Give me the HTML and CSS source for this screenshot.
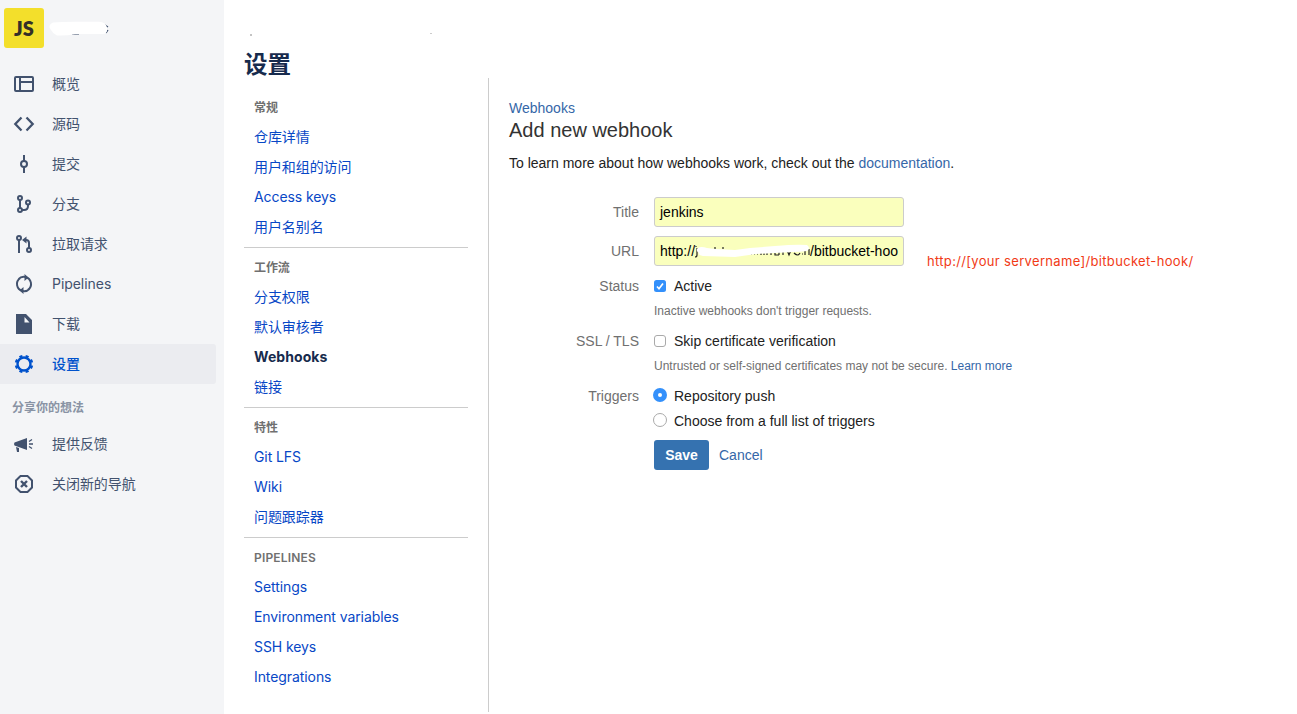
FILE: index.html
```html
<!DOCTYPE html>
<html lang="zh-CN">
<head>
<meta charset="utf-8">
<title>设置</title>
<link rel="stylesheet" href="styles.css">
</head>
<body>
<div class="app">
  <aside class="sidebar">
    <div class="repo">
      <div class="avatar">JS</div>
      <svg class="repo-name" width="62" height="16" viewBox="0 0 62 16"><path d="M57 4l3 2M60 9l-2 3" stroke="#42526e" stroke-width="1.300"/><path d="M24 13.500h7" stroke="#97a0af"/><path d="M5 1.500Q14 1 27 .800H51Q58 1 59 7T54 13L27 13Q18 15 9 14.500Q5 13 3 9Q-1 4 5 1.500Z" fill="#fff"/></svg>
    </div>
    <nav class="nav">
      <a class="nav-item"><svg class="icon" viewBox="0 0 24 24"><rect x="3" y="5" width="18" height="14" rx="1"/><path d="M8 5v14M8 10h13"/></svg><span>概览</span></a>
      <a class="nav-item"><svg class="icon" viewBox="0 0 24 24"><path d="M9.500 5.500L3.300 12l6.200 6.500M14.500 5.500l6.200 6.500-6.200 6.500" stroke-width="2.300"/></svg><span>源码</span></a>
      <a class="nav-item"><svg class="icon" viewBox="0 0 24 24"><circle cx="12" cy="12" r="3"/><path d="M12 3v6M12 15v6"/></svg><span>提交</span></a>
      <a class="nav-item"><svg class="icon" viewBox="0 0 24 24"><circle cx="8" cy="6" r="2"/><circle cx="8" cy="18" r="2"/><circle cx="16" cy="10.500" r="2"/><path d="M8 8v8M16 12.500v1.500q0 4-4 4h-2"/></svg><span>分支</span></a>
      <a class="nav-item"><svg class="icon" viewBox="0 0 24 24"><circle cx="7" cy="6" r="2"/><circle cx="17" cy="18" r="2"/><path d="M7 8v13M17 16v-5q0-3-3-3h-2"/><path class="solid" d="M10 8L14.500 4.500v7z"/></svg><span>拉取请求</span></a>
      <a class="nav-item"><svg class="icon" viewBox="0 0 24 24"><path d="M10.500 18.800A7 7 0 0 1 8 6.200M6.500 7.200A7 7 0 0 1 13 5M13.500 5.200A7 7 0 0 1 16 17.800M17.500 16.800A7 7 0 0 1 11 19"/><path class="solid" d="M12.500 2l4 3.500-4 3.500zM11.500 15v7l-4-3.500z"/></svg><span>Pipelines</span></a>
      <a class="nav-item"><svg class="icon" viewBox="0 0 24 24"><path class="solid" fill-rule="evenodd" d="M4 2h10l6 6v14H4zM12.500 5v5.500h5z"/></svg><span>下载</span></a>
      <a class="nav-item selected"><svg class="icon" viewBox="0 0 24 24"><circle cx="12" cy="12" r="6.500" stroke-width="2.400"/><circle cx="12" cy="12" r="8" stroke-width="2.600" pathLength="80" stroke-dasharray="4.800 5.200" stroke-dashoffset="7.400"/></svg><span>设置</span></a>
      <div class="nav-heading">分享你的想法</div>
      <a class="nav-item"><svg class="icon" viewBox="0 0 24 24"><path class="solid" d="M15 6v12L2.500 13.500Q1.500 12 2.500 10.500zM4 15l3 1v4H5z"/><path d="M17 9.500l3-2M17 12h4M17 14.500l3 2" stroke-width="1.300"/></svg><span>提供反馈</span></a>
      <a class="nav-item"><svg class="icon" viewBox="0 0 24 24"><path d="M8.500 4h7L20 8.500v7L15.500 20h-7L4 15.500v-7z"/><path d="M9 9l6 6M15 9l-6 6" stroke-width="2.400"/></svg><span>关闭新的导航</span></a>
    </nav>
  </aside>
  <main class="content">
    <svg class="crumbs" width="190" height="8" viewBox="0 0 190 8"><path d="M7 4v2" stroke="#888"/><path d="M186 3.500h2" stroke="#ccc"/></svg>
    <h1>设置</h1>
    <div class="columns">
      <nav class="subnav">
        <section class="group">
          <h2>常规</h2>
          <a>仓库详情</a><a>用户和组的访问</a><a>Access keys</a><a>用户名别名</a>
        </section>
        <section class="group">
          <h2>工作流</h2>
          <a>分支权限</a><a>默认审核者</a><a class="current">Webhooks</a><a>链接</a>
        </section>
        <section class="group">
          <h2>特性</h2>
          <a>Git LFS</a><a>Wiki</a><a>问题跟踪器</a>
        </section>
        <section class="group">
          <h2 class="latin">PIPELINES</h2>
          <a>Settings</a><a>Environment variables</a><a>SSH keys</a><a>Integrations</a>
        </section>
      </nav>
      <section class="panel">
        <a class="parent">Webhooks</a>
        <h3>Add new webhook</h3>
        <p class="intro">To learn more about how webhooks work, check out the <a>documentation</a>.</p>
        <form class="form">
          <div class="row"><span class="label">Title</span><div class="field">jenkins</div></div>
          <div class="row url-row"><span class="label">URL</span>
            <div class="field url"><span>http://</span><svg class="mask" width="115" height="22" viewBox="0 0 115 22"><path d="M1 6v1M2 8v7q0 2-2 2M20 7v2M28 7v2M56 14h1M59 14h1M62 14h1M66 13v2M69 12v3M72 12v3M76 11v4M80 11v4h4M84 11v4M88 10v5M92 10l2 5 2-5M99 13q4 4 6 0M107 14h1M110 9v6M114 9v6" fill="none" stroke="#222" stroke-width="1.200"/><path d="M3 8Q6 6 12 8L20 9 40 10 55 8 80 6Q102 4 112 5Q116 8 112 11Q105 12 98 12L80 13 61 14 40 17 8 16Q3 15 4 13Q0 10 3 8Z" fill="#fff"/></svg><span>/bitbucket-hoo</span></div>
            <span class="note">http://[your servername]/bitbucket-hook/</span>
          </div>
          <div class="row option"><span class="label">Status</span><svg class="ctl" viewBox="0 0 14 14"><rect x="1" y="1" width="12" height="12" rx="2.500" fill="#3390fb"/><path d="M4 7.500l2 2.200L10 4.500" fill="none" stroke="#fff" stroke-width="1.700"/></svg>Active</div>
          <div class="help">Inactive webhooks don't trigger requests.</div>
          <div class="row option"><span class="label">SSL / TLS</span><svg class="ctl" viewBox="0 0 14 14"><rect x="1.500" y="1.500" width="11" height="11" rx="2.500" fill="#fff" stroke="#aaa"/></svg>Skip certificate verification</div>
          <div class="help">Untrusted or self-signed certificates may not be secure. <a>Learn more</a></div>
          <div class="row option"><span class="label">Triggers</span><svg class="ctl" viewBox="0 0 14 14"><circle cx="7" cy="6" r="7" fill="#3390fb"/><circle cx="7" cy="6" r="2" fill="#fff"/></svg>Repository push</div>
          <div class="row option"><span class="label"></span><svg class="ctl" viewBox="0 0 14 14"><circle cx="7" cy="6" r="6.500" fill="#fff" stroke="#aaa"/></svg>Choose from a full list of triggers</div>
          <div class="actions"><button type="button">Save</button><a>Cancel</a></div>
        </form>
      </section>
    </div>
  </main>
</div>
</body>
</html>
```
FILE: styles.css
```css
* { box-sizing: border-box; }
body { margin: 0; background: #fff; font-family: "Liberation Sans", "Noto Sans CJK SC", sans-serif; font-size: 14px; color: #222; }
h1, h2, h3, p { margin: 0; }
.app { display: flex; width: 1297px; height: 714px; overflow: hidden; }

.sidebar { width: 224px; flex: none; background: #f4f5f7; color: #42526e; font-family: Inter, "Noto Sans CJK SC", sans-serif; }
.repo { display: flex; gap: 4px; height: 64px; padding: 8px 4px; }
.avatar { width: 40px; height: 40px; border-radius: 3px; background: #f3df2b; color: #332f28; font: 800 20px/40px Lato, sans-serif; text-align: center; }
.repo-name { margin-top: 13px; overflow: visible; }
.nav-item { display: flex; align-items: center; gap: 16px; width: 216px; height: 40px; padding-left: 12px; border-radius: 0 3px 3px 0; line-height: 20px; letter-spacing: -0.050px; }
.icon { width: 24px; height: 24px; fill: none; stroke: currentColor; stroke-width: 2; }
.icon .solid { fill: currentColor; stroke: none; }
.selected { background: #ebecf0; color: #0052cc; font-weight: 500; }
.nav-heading { height: 40px; padding-left: 12px; font-size: 12px; font-weight: 700; line-height: 47px; color: #8993a4; }

.content { flex: 1; padding: 30px 0 0 20px; }
.crumbs { display: block; }
h1 { height: 40px; color: #172b4d; font: 600 23.500px/51px "Noto Sans CJK SC", sans-serif; }
.columns { display: flex; height: 634px; }
.subnav { width: 224px; padding-top: 10px; color: #0747c6; font-family: Inter, "Noto Sans CJK SC", sans-serif; letter-spacing: -0.080px; }
.group { padding: 4px 10px 5px; border-bottom: 1px solid #ccc; }
.group:last-child { border: 0; }
.group h2 { height: 30px; font-size: 12px; font-weight: 600; line-height: 32px; color: #707070; }
.group .latin { line-height: 31px; letter-spacing: 0.180px; }
.group a { display: block; height: 30px; line-height: 30px; }
.group .current { font-weight: 700; color: #172b4d; letter-spacing: 0.080px; }

.panel { width: 788px; margin-left: 20px; padding: 20px 0 0 20px; border-left: 1px solid #ccc; }
.parent, .panel a { color: #3567a8; }
.parent { display: block; line-height: 20px; }
h3 { height: 30px; font-size: 20px; font-weight: 400; line-height: 24px; color: #333; }
.intro { height: 49px; line-height: 30px; }
.row { display: flex; align-items: center; height: 30px; }
.label { width: 130px; margin-right: 15px; text-align: right; color: #707070; }
.field { display: flex; align-items: center; width: 250px; height: 30px; padding: 0 5px; border: 1px solid #ccc; border-radius: 3px; background: #faffbd; color: #000; white-space: nowrap; overflow: hidden; }
.url-row { margin: 9px 0 7px; }
.mask { flex: none; }
.note { margin: 20px 0 0 23px; font-family: Inter, sans-serif; font-size: 13px; letter-spacing: 0.330px; white-space: nowrap; color: #f13a16; }
.option { height: 25px; }
.ctl { width: 14px; height: 14px; margin: 0 7px 0 -1px; overflow: visible; }
.help { height: 30px; padding-left: 145px; font-size: 12px; line-height: 27px; color: #707070; }
.actions { display: flex; align-items: center; gap: 10px; margin-top: 7px; padding-left: 145px; }
button { width: 55px; height: 30px; padding: 0; border: 0; border-radius: 3px; background: #3572b0; color: #fff; font: 700 14px "Liberation Sans", sans-serif; }
```
